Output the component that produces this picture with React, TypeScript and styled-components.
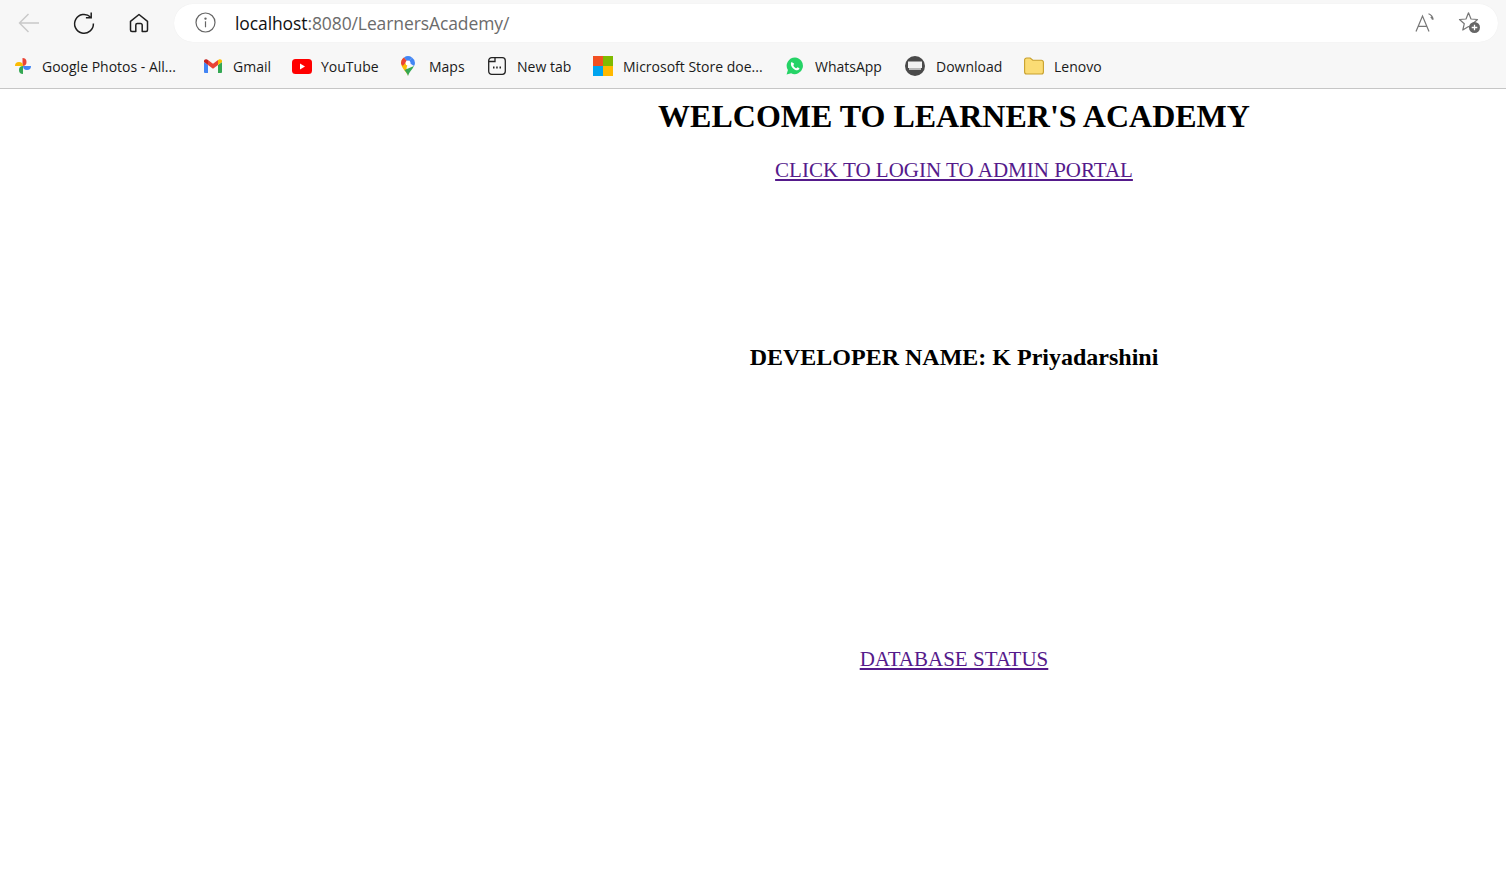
import React from "react";
import styled, { createGlobalStyle } from "styled-components";

const Global = createGlobalStyle`
  html, body { margin: 0; padding: 0; background: #fff; }
  body { font-family: "Liberation Serif", "Times New Roman", serif; overflow: hidden; }
`;

const Page = styled.div`
  width: 1506px;
  height: 883px;
  display: flex;
  flex-direction: column;
`;

const Chrome = styled.header`
  height: 88px;
  flex: none;
  background: #f7f7f7;
  border-bottom: 1px solid #c6c6c6;
  display: flex;
  flex-direction: column;
  font-family: "Open Sans", "Noto Sans", sans-serif;
`;

const Toolbar = styled.div`
  height: 47px;
  display: flex;
  align-items: center;
  padding: 0 8px 0 0;
`;

const NavButton = styled.span<{ $w: number }>`
  width: ${(p) => p.$w}px;
  flex: none;
  display: flex;
  justify-content: center;
  align-items: center;
`;

const Address = styled.div`
  flex: 1;
  height: 38px;
  margin-top: -1px;
  margin-left: 8px;
  border-radius: 19px;
  background: #fff;
  box-shadow: 0 0 1px rgba(0, 0, 0, 0.08);
  display: flex;
  align-items: center;
  padding: 0 17px 0 21px;
`;

const Url = styled.div`
  flex: 1;
  margin-left: 19px;
  font-size: 17.5px;
  color: #111;
  letter-spacing: -0.1px;
  span { color: #6b6b6b; }
`;

const AddressIcons = styled.div`
  display: flex;
  align-items: center;
  gap: 22px;
`;

const Bookmarks = styled.nav`
  height: 40px;
  display: flex;
  align-items: center;
  padding-bottom: 2px;
  padding-left: 13px;
`;

const Bookmark = styled.a<{ $w: number }>`
  width: ${(p) => p.$w}px;
  flex: none;
  display: flex;
  align-items: center;
  font-size: 14px;
  color: #1a1a1a;
  white-space: nowrap;
`;

const BookmarkIcon = styled.span<{ $w: number }>`
  width: ${(p) => p.$w}px;
  flex: none;
  display: flex;
  align-items: center;
`;

const Main = styled.main`
  flex: 1;
  padding-left: 402px;
  text-align: center;
`;

const Title = styled.h1`
  margin: 9px 0 0;
  font-size: 32px;
  line-height: 37px;
  font-weight: 700;
  color: #000;
`;

const LinkLine = styled.p<{ $top: number }>`
  margin: ${(p) => p.$top}px 0 0;
  font-size: 21px;
  line-height: 24px;
`;

const PortalLink = styled.a`
  color: #551a8b;
  text-decoration: underline;
`;

const Developer = styled.h2`
  margin: 161px 0 0;
  font-size: 24px;
  line-height: 28px;
  font-weight: 700;
  color: #000;
`;

const BackIcon = () => (
  <svg width="24" height="24" viewBox="0 0 24 24" fill="none" stroke="#c9c9c9" strokeWidth="1.4">
    <path d="M22 12H2.5M11.5 3l-9 9 9 9" />
  </svg>
);
const ReloadIcon = () => (
  <svg width="24" height="24" viewBox="0 0 24 24" fill="none" stroke="#1f1f1f" strokeWidth="1.5">
    <path d="M18.5 6A9.4 9.4 0 1 0 21.4 12.5" />
    <path d="M19.2 1.5V6.8H13.9" />
  </svg>
);
const HomeIcon = () => (
  <svg width="22" height="22" viewBox="0 0 22 22" fill="none" stroke="#1f1f1f" strokeWidth="1.5" strokeLinejoin="round">
    <path d="M2.5 9.3 11 2.5l8.500 6.800V18a1.500 1.500 0 0 1-1.500 1.500h-3.800V13a1.500 1.500 0 0 0-1.500-1.500H9.300A1.500 1.500 0 0 0 7.800 13v6.500H4A1.500 1.500 0 0 1 2.500 18Z" />
  </svg>
);
const InfoIcon = () => (
  <svg width="21" height="21" viewBox="0 0 21 21" fill="none" stroke="#666" strokeWidth="1.2">
    <circle cx="10.500" cy="10.500" r="9.500" />
    <path d="M10.500 9.300v6" />
    <circle cx="10.500" cy="6.600" r=".6" fill="#666" />
  </svg>
);
const ReadAloudIcon = () => (
  <svg width="21" height="21" viewBox="0 0 21 21" fill="none" stroke="#777" strokeWidth="1.2">
    <path d="M1 19.500 7.500 4l6.500 15.500M3.200 14.300h8.600" />
    <path d="M12 1.800c2.800 1 4.200 3 4.700 5.800M14.200 5c1 .6 1.600 1.500 1.800 2.600" transform="translate(1.500 0)" />
  </svg>
);
const FavIcon = () => (
  <svg width="23" height="23" viewBox="0 0 23 23" fill="none">
    <path d="M10.500 1.800 13 8l6.500.5-4.800 4.200 1.500 6.300-5.700-3.400L4.800 19l1.500-6.300L1.500 8.500 8 8Z" stroke="#777" strokeWidth="1.2" strokeLinejoin="round" />
    <circle cx="16.500" cy="16.500" r="5.500" fill="#666" />
    <path d="M16.500 13.700v5.600M13.700 16.500h5.600" stroke="#fff" strokeWidth="1.300" />
  </svg>
);

const PhotosIcon = () => (
  <svg width="20" height="20" viewBox="0 0 20 20">
    <path d="M10 10V2a4 4 0 0 1 4 4v0a4 4 0 0 1-4 4Z" fill="#ea4335" transform="translate(-0.500 0)" />
    <path d="M10 10h8a4 4 0 0 1-4 4 4 4 0 0 1-4-4Z" fill="#4285f4" />
    <path d="M10 10v8a4 4 0 0 1-4-4 4 4 0 0 1 4-4Z" fill="#34a853" />
    <path d="M10 10H2a4 4 0 0 1 4-4 4 4 0 0 1 4 4Z" fill="#fbbc04" />
  </svg>
);
const GmailIcon = () => (
  <svg width="18" height="14" viewBox="0 0 18 14">
    <path d="M0 3v9.500A1.200 1.200 0 0 0 1.200 14H4V6Z" fill="#4285f4" />
    <path d="M14 6v8h2.800a1.200 1.200 0 0 0 1.200-1.500V3Z" fill="#34a853" />
    <path d="M14 1v5l4-3V2c0-1.500-1.800-2.300-3-1.400Z" fill="#fbbc04" />
    <path d="M4 6V1l5 3.800L14 1v5L9 9.700Z" fill="#ea4335" />
    <path d="M0 2v1l4 3V1L3 .6C1.800-.3 0 .5 0 2Z" fill="#c5221f" />
  </svg>
);
const YouTubeIcon = () => (
  <svg width="20" height="15" viewBox="0 0 20 15">
    <rect width="20" height="15" rx="3.500" fill="#f00" />
    <path d="M8 4.500v6l5-3Z" fill="#fff" />
  </svg>
);
const MapsIcon = () => (
  <svg width="16" height="20" viewBox="0 0 16 20">
    <path d="M8 20C7 16 1 12 1 7a7 7 0 0 1 3-5.600L8 7 6.500 12Z" fill="#fbbc04" />
    <path d="M1.500 4.500A7 7 0 0 1 4 1.400L7 5 2.800 10C2 9 1 8 1 7Z" fill="#ea4335" />
    <path d="M4 1.400A7 7 0 0 1 12 1.400L8 6Z" fill="#4285f4" />
    <path d="M12 1.400A7 7 0 0 1 15 7c0 1-.4 2-1 3L8 6Z" fill="#4285f4" />
    <path d="M8 20c-.3-2-2-4-3.500-6L14 10c-1.500 3.500-5 6-6 10Z" fill="#34a853" />
    <circle cx="8" cy="7" r="2.500" fill="#fff" />
  </svg>
);
const NewTabIcon = () => (
  <svg width="18" height="18" viewBox="0 0 18 18" fill="none" stroke="#222" strokeWidth="1.300">
    <rect x=".7" y=".7" width="16.600" height="16.600" rx="3" />
    <path d="M.7 4.500H7V.7" />
    <path d="M5 10.500h1.500M8.200 10.500h1.500M11.500 10.500H13" strokeWidth="1.800" />
  </svg>
);
const MicrosoftIcon = () => (
  <svg width="20" height="20" viewBox="0 0 20 20">
    <rect width="10" height="10" fill="#f25022" />
    <rect x="10" width="10" height="10" fill="#7fba00" />
    <rect y="10" width="10" height="10" fill="#00a4ef" />
    <rect x="10" y="10" width="10" height="10" fill="#ffb900" />
  </svg>
);
const WhatsAppIcon = () => (
  <svg width="18" height="18" viewBox="0 0 18 18">
    <path d="M9 .5a8.300 8.300 0 0 0-7.100 12.600L.6 17.500l4.500-1.200A8.300 8.300 0 1 0 9 .5Z" fill="#25d366" />
    <path d="M6.300 4.800c-.5 0-1.400.8-1.400 2.200 0 3 3.300 6.300 6.200 6.300 1.500 0 2.400-1 2.400-1.700 0-.4-1.700-1.300-2-1.300-.4 0-.8.900-1.100.9-.8 0-3-2-3-3 0-.3.800-.7.800-1.100 0-.4-.8-1.300-1.900-1.300Z" fill="#fff" />
  </svg>
);
const DownloadIcon = () => (
  <svg width="20" height="20" viewBox="0 0 20 20">
    <circle cx="10" cy="10" r="10" fill="#4a4a4a" />
    <rect x="3" y="5.500" width="14" height="6.500" fill="#f2f2f2" />
    <rect x="4" y="12" width="12" height="2" fill="#b9b9b9" />
  </svg>
);
const FolderIcon = () => (
  <svg width="20" height="18" viewBox="0 0 20 18">
    <path d="M.6 3A2 2 0 0 1 2.600 1h3.600l2.600 2.200h8.600a2 2 0 0 1 2 2V15a2 2 0 0 1-2 2H2.600a2 2 0 0 1-2-2Z" fill="#fbdc74" stroke="#c8a02c" strokeWidth="1.100" />
  </svg>
);

const bookmarks = [
  { icon: <PhotosIcon />, iconW: 29, w: 191, label: "Google Photos - All..." },
  { icon: <GmailIcon />, iconW: 29, w: 88, label: "Gmail" },
  { icon: <YouTubeIcon />, iconW: 29, w: 108, label: "YouTube" },
  { icon: <MapsIcon />, iconW: 29, w: 88, label: "Maps" },
  { icon: <NewTabIcon />, iconW: 29, w: 105, label: "New tab" },
  { icon: <MicrosoftIcon />, iconW: 30, w: 193, label: "Microsoft Store doe..." },
  { icon: <WhatsAppIcon />, iconW: 29, w: 119, label: "WhatsApp" },
  { icon: <DownloadIcon />, iconW: 31, w: 119, label: "Download" },
  { icon: <FolderIcon />, iconW: 30, w: 90, label: "Lenovo" },
];

export default function App() {
  return (
    <Page>
      <Global />
      <Chrome>
        <Toolbar>
          <NavButton $w: number={undefined as never} $w={57}><BackIcon /></NavButton>
          <NavButton $w={54}><ReloadIcon /></NavButton>
          <NavButton $w={55}><HomeIcon /></NavButton>
          <Address>
            <InfoIcon />
            <Url>localhost<span>:8080/LearnersAcademy/</span></Url>
            <AddressIcons>
              <ReadAloudIcon />
              <FavIcon />
            </AddressIcons>
          </Address>
        </Toolbar>
        <Bookmarks>
          {bookmarks.map((b) => (
            <Bookmark key={b.label} $w={b.w}>
              <BookmarkIcon $w={b.iconW}>{b.icon}</BookmarkIcon>
              {b.label}
            </Bookmark>
          ))}
        </Bookmarks>
      </Chrome>
      <Main>
        <Title>WELCOME TO LEARNER'S ACADEMY</Title>
        <LinkLine $top={23}><PortalLink href="#">CLICK TO LOGIN TO ADMIN PORTAL</PortalLink></LinkLine>
        <Developer>DEVELOPER NAME: K Priyadarshini</Developer>
        <LinkLine $top={276}><PortalLink href="#">DATABASE STATUS</PortalLink></LinkLine>
      </Main>
    </Page>
  );
}
